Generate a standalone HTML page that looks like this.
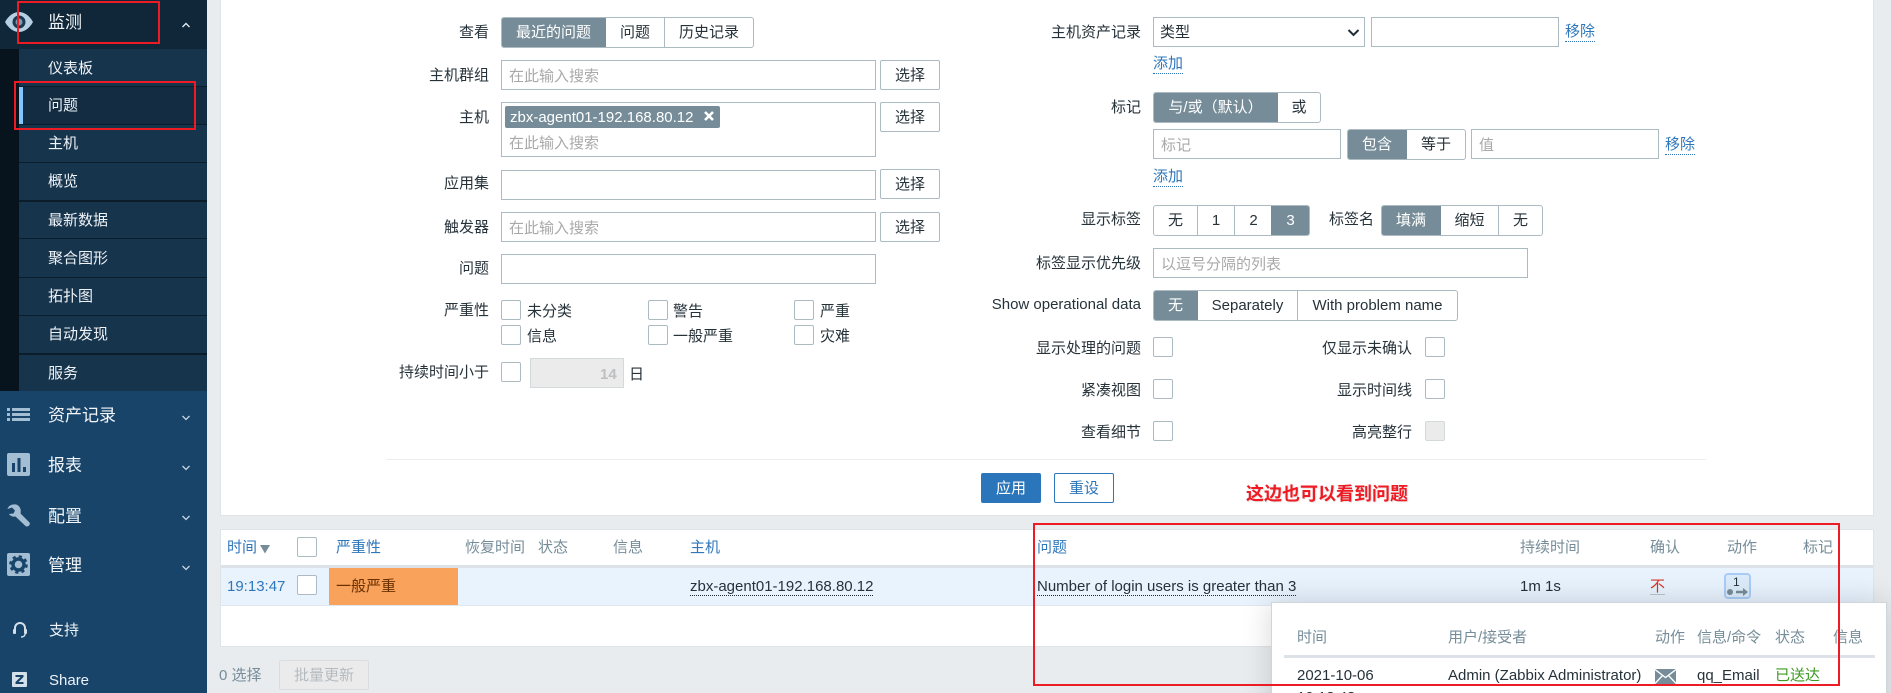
<!DOCTYPE html>
<html lang="zh"><head><meta charset="utf-8"><title>问题</title>
<style>
html,body{margin:0;padding:0;width:1891px;height:693px;overflow:hidden;background:#e9ecef}
body{position:relative;font:15px/22px "Liberation Sans","Noto Sans CJK SC",sans-serif;color:#26323a}
div,span,a,svg{position:absolute;box-sizing:border-box;white-space:nowrap}
.box{border:1px solid #acbbc2;background:#fff}
.ph{color:#a9a9a9}
.cb{width:20px;height:20px;border:1px solid #acbbc2;border-radius:2px;background:#fff}
.btn{width:60px;height:30px;left:880px;border:1px solid #acbbc2;border-radius:2px;background:#fff;text-align:center;line-height:30px}
.seg{border:1px solid #acbbc2;border-radius:3px;background:#fff;overflow:hidden;height:31px}
.seg span{top:0;height:29px;line-height:30px;text-align:center;border-right:1px solid #acbbc2}
.seg .on{background:#768d99;color:#fff;border-right:0;top:-1px;height:31px;line-height:32px}
.lnk{color:#2f77bb;border-bottom:1px dotted #2f77bb;height:21px}
.m{left:48px;color:#f2f6f9;font-size:17px}
.s{left:48px;color:#eef3f7}
.sep{left:19px;width:188px;height:1px;background:#0b1c2a}
.hd{color:#768d99}
.hl{color:#2f77bb}
.red{border:2px solid #ed1c24}
</style></head><body>

<!-- sidebar -->
<div style="left:0;top:0;width:207px;height:693px;background:#19446a"></div>
<div style="left:0;top:0;width:207px;height:49px;background:#10273a"></div>
<div style="left:0;top:49px;width:19px;height:342px;background:#07141e"></div>
<div style="left:19px;top:49px;width:188px;height:342px;background:#17344d"></div>
<div style="left:19px;top:87px;width:188px;height:38px;background:#132c42"></div>
<div style="left:19px;top:87px;width:4px;height:37px;background:#82c5ff"></div>
<div class="sep" style="top:86px"></div><div class="sep" style="top:124px"></div><div class="sep" style="top:162px"></div><div class="sep" style="top:200px;height:2px"></div><div class="sep" style="top:238px"></div><div class="sep" style="top:277px"></div><div class="sep" style="top:315px"></div><div class="sep" style="top:353px;height:2px"></div>

<svg style="left:4px;top:11px" width="30" height="22" viewBox="0 0 30 22"><path d="M1 11C5 4 10 1 15 1s10 3 14 10c-4 7-9 10-14 10S5 18 1 11z" fill="#b7cfe2"/><circle cx="15" cy="11" r="6.500" fill="#1b3a52"/><circle cx="15" cy="11" r="3.500" fill="#7d98ad"/></svg>
<div class="m" style="top:12px">监测</div>
<svg style="left:181px;top:21px" width="10" height="8" viewBox="0 0 10 8"><path d="M1.500 6L5 2.500 8.500 6" fill="none" stroke="#dfe8ef" stroke-width="1.400"/></svg>

<div class="s" style="top:58px">仪表板</div>
<div class="s" style="top:95px">问题</div>
<div class="s" style="top:133px">主机</div>
<div class="s" style="top:171px">概览</div>
<div class="s" style="top:210px">最新数据</div>
<div class="s" style="top:248px">聚合图形</div>
<div class="s" style="top:286px">拓扑图</div>
<div class="s" style="top:324px">自动发现</div>
<div class="s" style="top:363px">服务</div>

<svg style="left:7px;top:407px" width="24" height="15" viewBox="0 0 24 15" fill="#a3bdd2"><rect x="0" y="1" width="3" height="3"/><rect x="5" y="1" width="18" height="3"/><rect x="0" y="6" width="3" height="3"/><rect x="5" y="6" width="18" height="3"/><rect x="0" y="11" width="3" height="3"/><rect x="5" y="11" width="18" height="3"/></svg>
<div class="m" style="top:405px">资产记录</div>
<svg style="left:7px;top:453px" width="23" height="23" viewBox="0 0 23 23"><rect width="23" height="23" rx="2" fill="#a3bdd2"/><rect x="5" y="10" width="3" height="9" fill="#19446a"/><rect x="10.500" y="5" width="3" height="14" fill="#19446a"/><rect x="16" y="14" width="3" height="5" fill="#19446a"/></svg>
<div class="m" style="top:455px">报表</div>
<svg style="left:7px;top:504px" width="24" height="23" viewBox="0 0 24 23"><path d="M9 0.500C5 0 1.500 1.500 0.500 5L5 3.500 8 6.500 6.500 9.500 2 10 C3 12 6 13 8.500 12.500L18.500 22C20.500 23.500 24 21 22.500 18.500L13.500 9.500C14.500 5 12.500 1.500 9 0.500z" fill="#a3bdd2"/></svg>
<div class="m" style="top:506px">配置</div>
<svg style="left:7px;top:553px" width="23" height="23" viewBox="0 0 23 23"><rect width="23" height="23" rx="2" fill="#a3bdd2"/><circle cx="11.500" cy="11.500" r="8" fill="none" stroke="#19446a" stroke-width="2.600" stroke-dasharray="3.200 3.080"/><circle cx="11.500" cy="11.500" r="5.500" fill="none" stroke="#19446a" stroke-width="3.400"/></svg>
<div class="m" style="top:555px">管理</div>
<svg style="left:181px;top:414px" width="10" height="8" viewBox="0 0 10 8"><path d="M1.500 2L5 5.500 8.500 2" fill="none" stroke="#c5d5e2" stroke-width="1.300"/></svg>
<svg style="left:181px;top:464px" width="10" height="8" viewBox="0 0 10 8"><path d="M1.500 2L5 5.500 8.500 2" fill="none" stroke="#c5d5e2" stroke-width="1.300"/></svg>
<svg style="left:181px;top:514px" width="10" height="8" viewBox="0 0 10 8"><path d="M1.500 2L5 5.500 8.500 2" fill="none" stroke="#c5d5e2" stroke-width="1.300"/></svg>
<svg style="left:181px;top:564px" width="10" height="8" viewBox="0 0 10 8"><path d="M1.500 2L5 5.500 8.500 2" fill="none" stroke="#c5d5e2" stroke-width="1.300"/></svg>

<svg style="left:12px;top:621px" width="16" height="17" viewBox="0 0 16 17"><path d="M3 10V7a5 5 0 0 1 10 0v3" fill="none" stroke="#d5e1ea" stroke-width="2"/><rect x="1" y="8" width="3" height="5" rx="1" fill="#d5e1ea"/><rect x="12" y="8" width="3" height="5" rx="1" fill="#d5e1ea"/><path d="M13 13c0 2-2 3-4 3" fill="none" stroke="#d5e1ea" stroke-width="1.500"/></svg>
<div class="s" style="top:620px;left:49px">支持</div>
<svg style="left:12px;top:672px" width="15" height="15" viewBox="0 0 15 15"><rect width="15" height="15" rx="1" fill="#d5e1ea"/><path d="M3.500 3h8v2L6.500 10H11.500v2h-8v-2L8.500 5H3.500z" fill="#19446a"/></svg>
<div class="s" style="top:670px;left:49px">Share</div>

<!-- main filter panel -->
<div style="left:220px;top:0;width:1654px;height:516px;background:#fff;border:1px solid #dfe4e7;border-top:0"></div>

<div style="right:1402px;top:22px">查看</div>
<div class="seg" style="left:501px;top:17px;width:253px"><span class="on" style="left:-1px;width:105px">最近的问题</span><span style="left:104px;width:59px">问题</span><span style="left:163px;width:88px;border:0">历史记录</span></div>

<div style="right:1402px;top:65px">主机群组</div>
<div class="box" style="left:501px;top:60px;width:375px;height:30px"></div>
<div class="ph" style="left:509px;top:66px">在此输入搜索</div>
<div class="btn" style="top:60px">选择</div>

<div style="right:1402px;top:107px">主机</div>
<div class="box" style="left:501px;top:102px;width:375px;height:55px"></div>
<div style="left:505px;top:106px;width:215px;height:22px;background:#768d99;border-radius:2px;color:#fff;line-height:23px;padding-left:5px">zbx-agent01-192.168.80.12</div>
<svg style="left:703px;top:110px" width="12" height="12" viewBox="0 0 12 12"><path d="M2 2l8 8M10 2l-8 8" stroke="#fff" stroke-width="2.600"/></svg>
<div class="ph" style="left:509px;top:133px">在此输入搜索</div>
<div class="btn" style="top:102px">选择</div>

<div style="right:1402px;top:173px">应用集</div>
<div class="box" style="left:501px;top:170px;width:375px;height:30px"></div>
<div class="btn" style="top:169px">选择</div>

<div style="right:1402px;top:217px">触发器</div>
<div class="box" style="left:501px;top:212px;width:375px;height:30px"></div>
<div class="ph" style="left:509px;top:218px">在此输入搜索</div>
<div class="btn" style="top:212px">选择</div>

<div style="right:1402px;top:258px">问题</div>
<div class="box" style="left:501px;top:254px;width:375px;height:30px"></div>

<div style="right:1402px;top:300px">严重性</div>
<div class="cb" style="left:501px;top:300px"></div><div style="left:527px;top:301px">未分类</div>
<div class="cb" style="left:648px;top:300px"></div><div style="left:673px;top:301px">警告</div>
<div class="cb" style="left:794px;top:300px"></div><div style="left:820px;top:301px">严重</div>
<div class="cb" style="left:501px;top:325px"></div><div style="left:527px;top:326px">信息</div>
<div class="cb" style="left:648px;top:325px"></div><div style="left:673px;top:326px">一般严重</div>
<div class="cb" style="left:794px;top:325px"></div><div style="left:820px;top:326px">灾难</div>

<div style="right:1402px;top:362px">持续时间小于</div>
<div class="cb" style="left:501px;top:362px"></div>
<div style="left:530px;top:358px;width:94px;height:30px;background:#ebebeb;border:1px solid #d4d9dc"></div>
<div style="left:600px;top:364px;color:#bcc0c2;font-weight:bold">14</div>
<div style="left:629px;top:364px">日</div>

<!-- right column -->
<div style="right:750px;top:22px">主机资产记录</div>
<div class="box" style="left:1153px;top:17px;width:212px;height:30px"></div>
<div style="left:1160px;top:22px">类型</div>
<svg style="left:1347px;top:28px" width="13" height="10" viewBox="0 0 13 10"><path d="M1.500 2l5 5 5-5" fill="none" stroke="#1f2c33" stroke-width="2"/></svg>
<div class="box" style="left:1371px;top:17px;width:188px;height:30px"></div>
<div class="lnk" style="left:1565px;top:21px">移除</div>
<div class="lnk" style="left:1153px;top:53px">添加</div>

<div style="right:750px;top:97px">标记</div>
<div class="seg" style="left:1153px;top:92px;width:168px"><span class="on" style="left:-1px;width:125px">与/或（默认）</span><span style="left:124px;width:42px;border:0">或</span></div>
<div class="box" style="left:1153px;top:129px;width:188px;height:30px"></div>
<div class="ph" style="left:1161px;top:135px">标记</div>
<div class="seg" style="left:1347px;top:129px;width:119px"><span class="on" style="left:-1px;width:60px">包含</span><span style="left:59px;width:58px;border:0">等于</span></div>
<div class="box" style="left:1471px;top:129px;width:188px;height:30px"></div>
<div class="ph" style="left:1479px;top:135px">值</div>
<div class="lnk" style="left:1665px;top:134px">移除</div>
<div class="lnk" style="left:1153px;top:166px">添加</div>

<div style="right:750px;top:209px">显示标签</div>
<div class="seg" style="left:1153px;top:205px;width:157px"><span style="left:0;width:44px">无</span><span style="left:44px;width:37px">1</span><span style="left:81px;width:37px;border:0">2</span><span class="on" style="left:117px;width:39px">3</span></div>
<div style="left:1329px;top:209px">标签名</div>
<div class="seg" style="left:1381px;top:205px;width:162px"><span class="on" style="left:-1px;width:60px">填满</span><span style="left:59px;width:58px">缩短</span><span style="left:117px;width:43px;border:0">无</span></div>

<div style="right:750px;top:253px">标签显示优先级</div>
<div class="box" style="left:1153px;top:248px;width:375px;height:30px"></div>
<div class="ph" style="left:1161px;top:254px">以逗号分隔的列表</div>

<div style="right:750px;top:294px">Show operational data</div>
<div class="seg" style="left:1153px;top:290px;width:305px"><span class="on" style="left:-1px;width:45px">无</span><span style="left:44px;width:100px">Separately</span><span style="left:144px;width:159px;border:0">With problem name</span></div>

<div style="right:750px;top:338px">显示处理的问题</div><div class="cb" style="left:1153px;top:337px"></div>
<div style="right:750px;top:380px">紧凑视图</div><div class="cb" style="left:1153px;top:379px"></div>
<div style="right:750px;top:422px">查看细节</div><div class="cb" style="left:1153px;top:421px"></div>
<div style="right:479px;top:338px">仅显示未确认</div><div class="cb" style="left:1425px;top:337px"></div>
<div style="right:479px;top:380px">显示时间线</div><div class="cb" style="left:1425px;top:379px"></div>
<div style="right:479px;top:422px">高亮整行</div><div class="cb" style="left:1425px;top:421px;background:#ebebeb;border-color:#d4d9dc"></div>

<div style="left:386px;top:459px;width:1320px;height:1px;background:#ebeef0"></div>
<div style="left:981px;top:473px;width:60px;height:30px;background:#2b76bb;border-radius:2px;color:#fff;text-align:center;line-height:31px">应用</div>
<div style="left:1054px;top:473px;width:60px;height:30px;background:#fff;border:1px solid #2b76bb;border-radius:2px;color:#2b76bb;text-align:center;line-height:30px">重设</div>
<div style="left:1246px;top:483px;font-size:18px;font-weight:bold;color:#f01a22;text-shadow:1px 1px 0 #e8e8e8,-1px 0 0 #f3f3f3">这边也可以看到问题</div>

<!-- table -->
<div style="left:220px;top:529px;width:1654px;height:118px;background:#fff;border:1px solid #dfe4e7"></div>
<div style="left:221px;top:565px;width:1652px;height:3px;background:#dce2e7"></div>
<div style="left:221px;top:568px;width:1652px;height:38px;background:#e8f3fe;border-bottom:1px solid #dfe8f0"></div>
<div style="left:329px;top:568px;width:129px;height:37px;background:#f8a25b"></div>

<div class="hl" style="left:227px;top:537px">时间</div>
<svg style="left:259px;top:544px" width="12" height="10" viewBox="0 0 12 10"><path d="M1 1h10L6 9.500z" fill="#768d99"/></svg>
<div class="cb" style="left:297px;top:537px"></div>
<div class="hl" style="left:336px;top:537px">严重性</div>
<div class="hd" style="left:465px;top:537px">恢复时间</div>
<div class="hd" style="left:538px;top:537px">状态</div>
<div class="hd" style="left:613px;top:537px">信息</div>
<div class="hl" style="left:690px;top:537px">主机</div>
<div class="hl" style="left:1037px;top:537px">问题</div>
<div class="hd" style="left:1520px;top:537px">持续时间</div>
<div class="hd" style="left:1650px;top:537px">确认</div>
<div class="hd" style="left:1727px;top:537px">动作</div>
<div class="hd" style="left:1803px;top:537px">标记</div>

<div class="hl" style="left:227px;top:576px">19:13:47</div>
<div class="cb" style="left:297px;top:575px"></div>
<div style="left:336px;top:576px;color:#6b3000">一般严重</div>
<div style="left:690px;top:576px;height:20px;border-bottom:1px dotted #1f2c33">zbx-agent01-192.168.80.12</div>
<div style="left:1037px;top:576px;height:20px;border-bottom:1px dotted #1f2c33">Number of login users is greater than 3</div>
<div style="left:1520px;top:576px">1m 1s</div>
<div style="left:1650px;top:576px;height:19px;color:#d9362a;border-bottom:1px solid #b8c4cc">不</div>

<div style="left:1724px;top:573px;width:27px;height:26px;background:#dcebfa;border:2px solid #a9cdf6;border-radius:4px"></div>
<div style="left:1733px;top:574px;font-size:12px;line-height:16px">1</div>
<svg style="left:1726px;top:587px" width="23" height="10" viewBox="0 0 23 10"><circle cx="4" cy="5" r="3" fill="#768d99"/><path d="M10 3.800h7V1l5 4-5 4V6.200h-7z" fill="#768d99"/></svg>

<div style="left:219px;top:665px;color:#768d99">0 选择</div>
<div style="left:279px;top:660px;width:90px;height:30px;background:#ebebeb;border:1px solid #d9dde0;border-radius:2px;color:#b4bbc0;text-align:center;line-height:30px">批量更新</div>

<!-- popup -->
<div style="left:1271px;top:602px;width:616px;height:120px;background:#fff;border:1px solid #cfd6da;box-shadow:0 0 28px rgba(0,0,0,.16)"></div>
<div class="hd" style="left:1297px;top:627px">时间</div>
<div class="hd" style="left:1448px;top:627px">用户/接受者</div>
<div class="hd" style="left:1655px;top:627px">动作</div>
<div class="hd" style="left:1697px;top:627px">信息/命令</div>
<div class="hd" style="left:1775px;top:627px">状态</div>
<div class="hd" style="left:1833px;top:627px">信息</div>
<div style="left:1284px;top:655px;width:591px;height:3px;background:#dce2e7"></div>
<div style="left:1297px;top:665px">2021-10-06</div>
<div style="left:1448px;top:665px">Admin (Zabbix Administrator)</div>
<svg style="left:1655px;top:669px" width="21" height="15" viewBox="0 0 21 15"><rect width="21" height="15" fill="#768d99"/><path d="M0 0.500l10.500 8 10.500-8M0 14.500l7.500-8M21 14.500l-7.500-8" fill="none" stroke="#fff" stroke-width="1.300"/></svg>
<div style="left:1697px;top:665px">qq_Email</div>
<div style="left:1775px;top:665px;color:#3d9a22">已送达</div>
<div style="left:1297px;top:687px">19:13:48</div>

<!-- annotations -->
<div class="red" style="left:17px;top:1px;width:143px;height:43px"></div>
<div class="red" style="left:14px;top:81px;width:182px;height:49px"></div>
<div class="red" style="left:1033px;top:523px;width:807px;height:163px"></div>
</body></html>
